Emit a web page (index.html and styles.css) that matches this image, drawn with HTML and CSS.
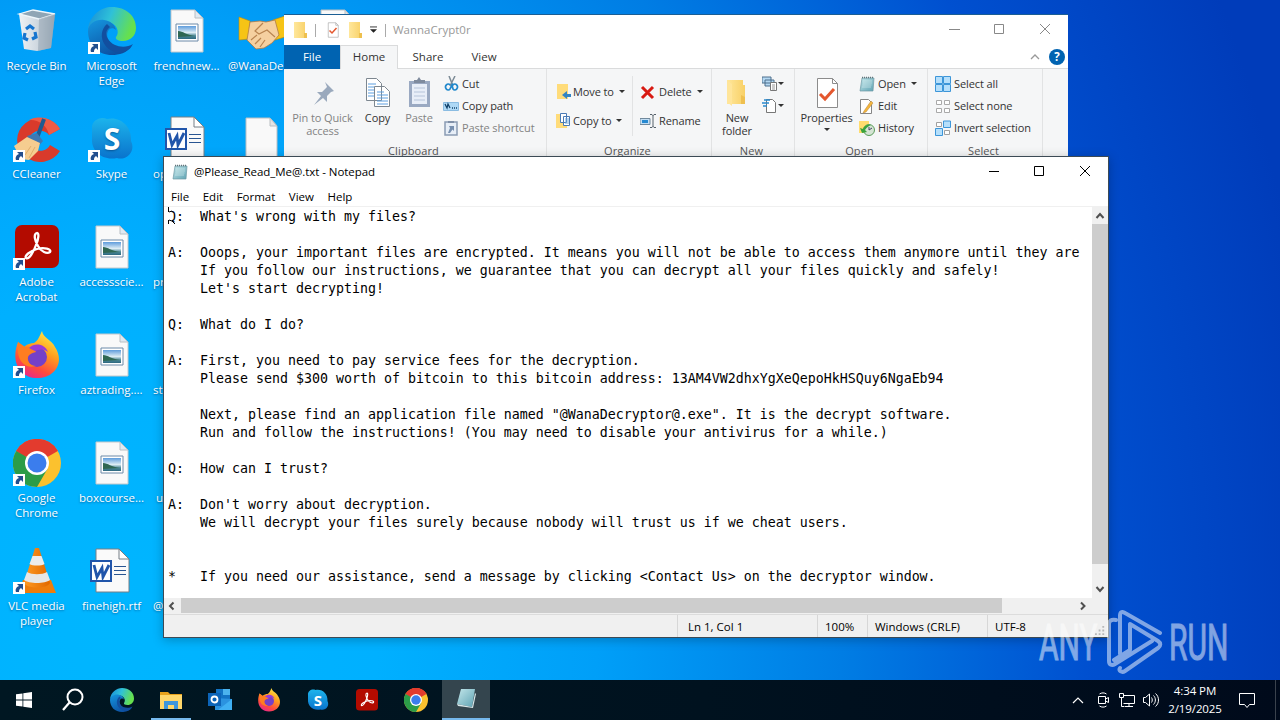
FILE: index.html
```html
<!DOCTYPE html>
<html lang="en">
  <head>
    <meta charset="UTF-8">
    <title>Desktop</title>
    <link rel="stylesheet" href="styles.css">
  </head>
  <body>
    <!-- shared icons -->
    <svg class="defs" width="0" height="0">
      <defs>
        <linearGradient id="edge1" x1="0" y1="0" x2="1" y2="0.3"><stop offset="0" stop-color="#1689d8"/><stop offset="0.5" stop-color="#2fc1d8"/><stop offset="1" stop-color="#66e04e"/></linearGradient>
        <linearGradient id="edge2" x1="0" y1="0" x2="0.6" y2="1"><stop offset="0" stop-color="#1597e0"/><stop offset="1" stop-color="#0c4fa0"/></linearGradient>
        <linearGradient id="fox" x1="0.8" y1="0" x2="0.3" y2="1"><stop offset="0" stop-color="#fff04a"/><stop offset="0.4" stop-color="#ffa01e"/><stop offset="0.75" stop-color="#ff4b3c"/><stop offset="1" stop-color="#e8288c"/></linearGradient>
        <linearGradient id="sky" x1="0" y1="0" x2="0" y2="1"><stop offset="0" stop-color="#1cb4ec"/><stop offset="1" stop-color="#0a73cc"/></linearGradient>
        <linearGradient id="photo" x1="0" y1="0" x2="0" y2="1"><stop offset="0" stop-color="#5e9cdc"/><stop offset="0.5" stop-color="#dcecf4"/><stop offset="0.75" stop-color="#4f8a98"/><stop offset="1" stop-color="#2c6880"/></linearGradient>
        <linearGradient id="note" x1="0" y1="0" x2="1" y2="1"><stop offset="0" stop-color="#c2e6ea"/><stop offset="1" stop-color="#5fa3b3"/></linearGradient>
        <linearGradient id="bin" x1="0" y1="0" x2="1" y2="0"><stop offset="0" stop-color="#eef2f5"/><stop offset="0.6" stop-color="#c9d3dc"/><stop offset="1" stop-color="#94a5b3"/></linearGradient>
        <linearGradient id="cone" x1="0" y1="0" x2="1" y2="0"><stop offset="0" stop-color="#ff9a22"/><stop offset="1" stop-color="#e06800"/></linearGradient>
        <linearGradient id="fold" x1="0" y1="0" x2="1" y2="0"><stop offset="0" stop-color="#ffe79b"/><stop offset="1" stop-color="#f8d066"/></linearGradient>

        <symbol id="i-bin" viewBox="0 0 48 48">
          <path d="M6 7l14-4 22 4-4 34-14 3-13-2z" fill="url(#bin)"/>
          <path d="M6 7l14-4 22 4-16 5z" fill="#8fa5b5" stroke="#eef6fb" stroke-width="1.3"/>
          <path d="M26 12l-1 32 13-3 4-34z" fill="#98a7b4" opacity="0.6"/>
          <path d="M13 22l4-3 4 3M22 25l1 5-4 2M15 33l-4-2 1-5" fill="none" stroke="#1675cf" stroke-width="3.2"/>
        </symbol>
        <symbol id="i-edge" viewBox="0 0 48 48">
          <path d="M0 22C2 8 13 0 24 0c14 0 24 9 24 21 0 8-6 13-13 13-5 0-8-2-7-4 4-5 1-14-9-15C10 14 3 18 0 22z" fill="url(#edge1)"/>
          <path d="M0 24c0-7 8-12 16-11 7 1 11 5 12 10-5-5-11 1-8 9 3 9 15 14 24 7-5 7-13 9-20 9C10 48 0 38 0 24z" fill="url(#edge2)"/>
          <path d="M19 17c-6 5-7 14-2 21 4 6 13 9 18 7 5-1 8-5 10-8-8 5-20 3-25-5-3-5-2-9 2-12-1-1-2-2-3-3z" fill="#124f9f"/>
        </symbol>
        <symbol id="i-photo" viewBox="0 0 48 48">
          <path d="M8 3h24l8 8v34H8z" fill="#f9f9f9" stroke="#c3c8cc"/>
          <path d="M32 3v8h8z" fill="#dfe9f2" stroke="#b8bfc4"/>
          <path d="M13 17h22v17H13z" fill="#fff" stroke="#6c8aa8"/>
          <path d="M15 19h18v13H15z" fill="url(#photo)"/>
          <path d="M15 24c5 0 8 4 17 5l-17 1z" fill="#2f6753"/>
        </symbol>
        <symbol id="i-blank" viewBox="0 0 48 48">
          <path d="M8 3h24l7 8v34H8z" fill="#f9f9f9" stroke="#b9bec2"/>
          <path d="M32 3v8h7z" fill="#e4e4e4" stroke="#b9bec2"/>
        </symbol>
        <symbol id="i-word" viewBox="0 0 48 48">
          <path d="M8 2h23l10 10v33H8z" fill="#fafafa" stroke="#777f86"/>
          <path d="M31 2v10h10z" fill="#fff" stroke="#777f86"/>
          <path d="M26 19.500h12M26 23.500h12M26 27.500h12" stroke="#295592" stroke-width="1.2"/>
          <path d="M3 14h20v20H3z" fill="#fff" stroke="#2155aa" stroke-width="2"/>
          <path d="M6 18l3 12 5-9 1 9 6-12" fill="none" stroke="#2155aa" stroke-width="2.8"/>
        </symbol>
        <symbol id="i-hands" viewBox="0 0 48 48">
          <path d="M1 10l11 4-1 18-10 1zM47 9l-12 4 2 20 10-3z" fill="#f6c416" stroke="#c58a00" stroke-width="0.6"/>
          <path d="M12 15l10-1 6 1 9-2 4 15-7 8-8 5-8 1-9-9z" fill="#f5d0a0" stroke="#b07b45" stroke-width="0.8"/>
          <path d="M25 16l-8 8 4 3 8-4 8 7M13 33l6-5M17 37l6-6M22 40l5-7" fill="none" stroke="#b98450" stroke-width="1.2"/>
        </symbol>
        <symbol id="i-cc" viewBox="0 0 48 48">
          <path d="M47 14A23 22 0 1 0 47 36L37 30A11 10 0 1 1 36 20z" fill="#d93a2b"/>
          <path d="M47 14A23 22 0 0 0 16 5c8-1 18 4 20 15z" fill="#f05b45"/>
          <path d="M31 4l-7 19" stroke="#205b91" stroke-width="4"/>
          <path d="M14 21l10-3 6 8-6 7z" fill="#3e79b4"/>
          <path d="M1 31l13-9 13 6-2 8-9 9-8-1z" fill="#f5cd90"/>
          <path d="M12 40l6-9M16 43l6-11" stroke="#e0ae6c"/>
        </symbol>
        <symbol id="i-skype" viewBox="0 0 48 48">
          <path d="M4 14C3 5 13 1 19 4 32 1 44 11 43 26c5 10-4 20-14 17C14 46 3 36 4 23z" fill="url(#sky)"/>
          <text x="24" y="35" text-anchor="middle" font-family="Open Sans" font-weight="700" font-size="30" fill="#fff">S</text>
        </symbol>
        <symbol id="i-acro" viewBox="0 0 48 48">
          <rect x="2" y="2" width="44" height="43" rx="7" fill="#b30b00"/>
          <path d="M24 10c-4 1-2 8 1 13 3 6 9 8 12 6 2-3-6-5-13-3-7 2-13 7-11 9 3 2 8-7 10-13 3-7 3-12 1-12z" fill="none" stroke="#fff" stroke-width="2.3"/>
        </symbol>
        <symbol id="i-fox" viewBox="0 0 48 48">
          <path d="M5 11l6 5c3-3 7-4 10-4 4-2 6-8 8-12 1 7 10 9 13 16 10 15 0 31-18 31C8 47-3 32 5 11z" fill="url(#fox)"/>
          <circle cx="24" cy="26" r="10" fill="#7540c8"/>
          <path d="M5 11l7 5c6-1 9 1 11 5-5 1-7 3-8 5-1 5 3 9 8 9-9 3-17-3-18-14z" fill="#ff7d20"/>
          <path d="M16 17c6-6 16-4 19 4-6-4-9-2-13-1z" fill="#9a3ad6"/>
        </symbol>
        <symbol id="i-chrome" viewBox="0 0 48 48">
          <circle cx="24" cy="24" r="24" fill="#fbc12e"/>
          <path d="M24 24L3.200 12A24 24 0 0 1 44.800 12z" fill="#e33b2e"/>
          <path d="M24 12h20.800A24 24 0 0 0 3.200 12l8 6z" fill="#e33b2e"/>
          <path d="M3.200 12A24 24 0 0 0 24 48l10.400-18L24 24z" fill="#2b9c48"/>
          <circle cx="24" cy="24" r="12" fill="#fff"/>
          <circle cx="24" cy="24" r="9.500" fill="#3b7ded"/>
        </symbol>
        <symbol id="i-vlc" viewBox="0 0 48 48">
          <path d="M10 33h28l5 13H5z" fill="#ee7d0c"/>
          <path d="M22 1h4l11 35c-3 6-23 6-26 0z" fill="url(#cone)"/>
          <path d="M19.500 9h9l3 8c-3 2-12 2-15 0z" fill="#ececec"/>
          <path d="M14 25c5 3 15 3 20 0l3 8c-5 4-21 4-26 0z" fill="#e6e6e6"/>
        </symbol>
        <symbol id="i-short" viewBox="0 0 12 12">
          <path d="M0 0h12v12H0z" fill="#fff"/>
          <path d="M4 2h6v6L8 6c-2 1-2 3-2 4H3C2 8 3 5 6 4z" fill="#234f8e"/>
        </symbol>
        <symbol id="i-note" viewBox="0 0 16 16">
          <path d="M3 2h12l-1 13H1z" fill="url(#note)" stroke="#6e9aa5" stroke-width="0.7"/>
          <path d="M4 5h9M4 7h9M3.500 9h9M3 11h9" stroke="#e4f5f7" stroke-width="0.5"/>
          <path d="M3 1.500h12" stroke="#62757b" stroke-width="1.600" stroke-dasharray="1 1"/>
        </symbol>
        <symbol id="i-folder" viewBox="0 0 16 16">
          <path d="M2 0h11v11h2v5H2z" fill="url(#fold)"/>
          <path d="M12 11h3v5h-3z" fill="#eec04e"/>
        </symbol>
        <symbol id="i-check" viewBox="0 0 32 32">
          <path d="M6.500 1.500h15l5 5v24h-20z" fill="#fff" stroke="#8c8c8c"/>
          <path d="M21.500 1.500v5h5" fill="none" stroke="#8c8c8c"/>
          <path d="M9 17l5 5 9-10" fill="none" stroke="#e4572e" stroke-width="3"/>
        </symbol>
      </defs>
    </svg>

    <div class="screen">
      <div class="desktop">
        <div class="icon"><svg><use href="#i-bin"/></svg><span>Recycle Bin</span></div>
        <div class="icon"><svg><use href="#i-cc"/></svg><svg class="short"><use href="#i-short"/></svg><span>CCleaner</span></div>
        <div class="icon"><svg><use href="#i-acro"/></svg><svg class="short"><use href="#i-short"/></svg><span>Adobe<br>Acrobat</span></div>
        <div class="icon"><svg><use href="#i-fox"/></svg><svg class="short"><use href="#i-short"/></svg><span>Firefox</span></div>
        <div class="icon"><svg><use href="#i-chrome"/></svg><svg class="short"><use href="#i-short"/></svg><span>Google<br>Chrome</span></div>
        <div class="icon"><svg><use href="#i-vlc"/></svg><svg class="short"><use href="#i-short"/></svg><span>VLC media<br>player</span></div>

        <div class="icon"><svg><use href="#i-edge"/></svg><svg class="short"><use href="#i-short"/></svg><span>Microsoft<br>Edge</span></div>
        <div class="icon"><svg><use href="#i-skype"/></svg><svg class="short"><use href="#i-short"/></svg><span>Skype</span></div>
        <div class="icon"><svg><use href="#i-photo"/></svg><span>accessscie...</span></div>
        <div class="icon"><svg><use href="#i-photo"/></svg><span>aztrading....</span></div>
        <div class="icon"><svg><use href="#i-photo"/></svg><span>boxcourse...</span></div>
        <div class="icon"><svg><use href="#i-word"/></svg><span>finehigh.rtf</span></div>

        <div class="icon"><svg><use href="#i-photo"/></svg><span>frenchnew...</span></div>
        <div class="icon cut"><svg><use href="#i-word"/></svg><span>op</span></div>
        <div class="icon cut"><svg></svg><span>pr</span></div>
        <div class="icon cut"><svg></svg><span>st</span></div>
        <div class="icon cut"><svg></svg><span>&nbsp;u</span></div>
        <div class="icon cut"><svg></svg><span>@</span></div>

        <div class="icon cut"><svg><use href="#i-hands"/></svg><span>@WanaDec</span></div>
        <div class="icon"><svg><use href="#i-blank"/></svg></div>
        <div class="icon last"><svg><use href="#i-blank"/></svg></div>
      </div>

      <!-- explorer -->
      <div class="window explorer">
        <div class="titlebar">
          <svg class="s16"><use href="#i-folder"/></svg>
          <i class="bar"></i>
          <svg class="s16"><use href="#i-check"/></svg>
          <svg class="s16"><use href="#i-folder"/></svg>
          <svg class="qat" viewBox="0 0 8 8"><path d="M0 .500h8" stroke="#222"/><path d="M0 3h8L4 7z" fill="#222"/></svg>
          <i class="bar"></i>
          <span class="caption">WannaCrypt0r</span>
          <svg class="controls" viewBox="0 0 138 30"><path d="M19 14.500h11M64.500 9.500h9v9h-9zM110 9l10 10M120 9l-10 10" fill="none" stroke="#888"/></svg>
        </div>
        <div class="tabs">
          <span class="tab file">File</span>
          <span class="tab home">Home</span>
          <span class="tab">Share</span>
          <span class="tab">View</span>
          <svg class="chev" viewBox="0 0 10 6"><path d="M1 5l4-4 4 4" fill="none" stroke="#999" stroke-width="1.300"/></svg>
          <span class="help">?</span>
        </div>
        <div class="ribbon">
          <div class="group g-clip">
            <div class="body">
              <div class="big pin off"><svg viewBox="0 0 32 32"><path d="M18 5l9 9-3 1-4 4v6l-4-4-9 7 7-9-4-4h5l5-5z" fill="#9aa9bd"/></svg>Pin to Quick<br>access</div>
              <div class="big copy"><svg viewBox="0 0 32 32"><path d="M4.500 1.500h10l5 5v17h-15zM12.500 9.500h10l5 5v15h-15z" fill="#fff" stroke="#7d8790"/><path d="M6 7h8M6 10h6M6 13h6M6 16h6M6 19h6M15 15h7M15 18h11M15 21h11M15 24h11M15 27h11" stroke="#5c9fe0"/></svg>Copy</div>
              <div class="big paste off"><svg viewBox="0 0 32 32"><path d="M6 4h21v26H6z" fill="#9aa9c2"/><path d="M9 7h15v20H9z" fill="#e8eef8"/><path d="M11 6V3h3l2-3 2 3h4v3z" fill="#7f8b9e"/><path d="M11 11h11M11 15h11M11 19h11M11 23h11" stroke="#b6c4da"/></svg>Paste</div>
              <div class="rows">
                <div class="row"><svg viewBox="0 0 16 16"><path d="M6 0l4 10M12 0L7 10" stroke="#7c8b96" stroke-width="1.500"/><path d="M7 9a2.500 3 0 1 0 0 4l2-4 1 4a2.500 3 0 1 0 0-4" fill="none" stroke="#2188cc" stroke-width="1.700"/></svg>Cut</div>
                <div class="row"><svg viewBox="0 0 16 16"><path d="M.500 4.500h15v8H.500z" fill="#aed8f5" stroke="#8abce2"/><path d="M2 6l2 4 1-4 2 4M9 10h1M11 10h1M13 10h1" fill="none" stroke="#12436c" stroke-width="1.300"/></svg>Copy path</div>
                <div class="row off"><svg viewBox="0 0 16 16"><path d="M2 2h12v13H2z" fill="#e7eef7" stroke="#8b9cb4" stroke-width="1.500"/><path d="M5 1h6v2H5z" fill="#8090a8"/><path d="M6 6h5v5L9.500 9.500 7 13H5l2-5z" fill="#7890b0"/></svg>Paste shortcut</div>
              </div>
            </div>
            <div class="name">Clipboard</div>
          </div>
          <div class="group g-org">
            <div class="body">
              <div class="rows tall first">
                <div class="row"><svg viewBox="0 0 16 16"><path d="M1 0h11v15H1z" fill="#ffdc7a"/><path d="M15 13h-4v2L6 11l5-4v3h4z" fill="#3284c4"/></svg>Move to<b></b></div>
                <div class="row"><svg viewBox="0 0 16 16"><path d="M0 1h11v14H0z" fill="#ffdc7a"/><path d="M4.500 .500h6v9h-6zM7.500 3.500h6v9h-6z" fill="#fff" stroke="#4a7ab5"/><path d="M9 6h4M9 8h4M9 10h4" stroke="#6fa7dd"/></svg>Copy to<b></b></div>
              </div>
              <i class="split"></i>
              <div class="rows tall">
                <div class="row"><svg viewBox="0 0 16 16"><path d="M2 3l11 11M13 3L2 14" stroke="#d81a12" stroke-width="3"/></svg>Delete<b></b></div>
                <div class="row"><svg viewBox="0 0 16 16"><path d="M0 5.500h10v6H0z" fill="#c3def4" stroke="#71899c"/><path d="M2 7h6v3H2z" fill="#2689d1"/><path d="M10 1.500h2l1 1 1-1h2M13 2v12M10 14.500h2l1-1 1 1h2" fill="none" stroke="#55606a"/></svg>Rename</div>
              </div>
            </div>
            <div class="name">Organize</div>
          </div>
          <div class="group g-new">
            <div class="body">
              <div class="big newf"><svg viewBox="0 0 32 32"><path d="M6 3h16v5h2v19H6z" fill="url(#fold)"/><path d="M6 3l5 4v22l-5-4z" fill="#ffe59a"/><path d="M20 18l4 2v7h-4z" fill="#efc050"/></svg>New<br>folder</div>
              <div class="rows">
                <div class="row"><svg viewBox="0 0 16 16"><path d="M0 1h9v6H0zM3 4h9v6H3z" fill="#b4d8f2" stroke="#4d6f8c"/><path d="M8.500 6.500h6v8h-6z" fill="#fff" stroke="#777"/><path d="M10 9h3M10 11h3M10 13h3" stroke="#999"/></svg><b></b></div>
                <div class="row"><svg viewBox="0 0 16 16"><path d="M4.500 1.500h6l3 3v10h-9z" fill="#fff" stroke="#777"/><path d="M2 2h6M0 5h7M1 8h4" stroke="#2a8ad0" stroke-width="1.500"/></svg><b></b></div>
              </div>
            </div>
            <div class="name">New</div>
          </div>
          <div class="group g-open">
            <div class="body">
              <div class="big prop"><svg><use href="#i-check"/></svg>Properties<br><b></b></div>
              <div class="rows">
                <div class="row"><svg><use href="#i-note"/></svg>Open<b></b></div>
                <div class="row"><svg viewBox="0 0 16 16"><path d="M1.500 1.500h8l3 3v11h-11z" fill="#fff" stroke="#858585"/><path d="M5 13l7-10 2 2-7 9-3 1z" fill="#f6b73c" stroke="#b0813a" stroke-width="0.500"/></svg>Edit</div>
                <div class="row"><svg viewBox="0 0 16 16"><path d="M0 1h10v12H0z" fill="#ffdc6e"/><circle cx="10" cy="10" r="5.500" fill="#d5e4d4" stroke="#5b9c5b"/><path d="M10 7v3l3-2" fill="none" stroke="#446"/><path d="M1 8l2 5 5-1-2-2c2-3 4-4 6-5-4-1-7 1-8 4z" fill="#3aa33c"/></svg>History</div>
              </div>
            </div>
            <div class="name">Open</div>
          </div>
          <div class="group g-sel">
            <div class="body">
              <div class="rows">
                <div class="row"><svg viewBox="0 0 16 16"><path d="M.500 .500h7v7h-7zM8.500 .500h7v7h-7zM.500 8.500h7v7h-7zM8.500 8.500h7v7h-7z" fill="#b5dffb" stroke="#3d96d9"/></svg>Select all</div>
                <div class="row"><svg viewBox="0 0 16 16"><path d="M1.500 2.500h5v4h-5zM9.500 2.500h5v4h-5zM1.500 10.500h5v4h-5zM9.500 10.500h5v4h-5z" fill="#fff" stroke="#a9a9a9"/></svg>Select none</div>
                <div class="row"><svg viewBox="0 0 16 16"><path d="M1.500 2.500h5v4h-5zM9.500 10.500h5v4h-5z" fill="#fff" stroke="#a0a0a0"/><path d="M8.500 1h7v6.500h-7zM.500 8.500h7v7h-7z" fill="#b5dffb" stroke="#3d96d9"/></svg>Invert selection</div>
              </div>
            </div>
            <div class="name">Select</div>
          </div>
        </div>
      </div>

      <!-- notepad -->
      <div class="window notepad">
        <div class="titlebar">
          <svg class="s16"><use href="#i-note"/></svg>
          <span class="caption">@Please_Read_Me@.txt - Notepad</span>
          <svg class="controls" viewBox="0 0 138 30"><path d="M19 14.500h10M64.500 9.500h9v9h-9zM110 9l10 10M120 9l-10 10" fill="none" stroke="#000"/></svg>
        </div>
        <div class="menu"><span>File</span><span>Edit</span><span>Format</span><span>View</span><span>Help</span></div>
        <div class="edit">
<pre>Q:  What's wrong with my files?

A:  Ooops, your important files are encrypted. It means you will not be able to access them anymore until they are
    If you follow our instructions, we guarantee that you can decrypt all your files quickly and safely!
    Let's start decrypting!

Q:  What do I do?

A:  First, you need to pay service fees for the decryption.
    Please send $300 worth of bitcoin to this bitcoin address: 13AM4VW2dhxYgXeQepoHkHSQuy6NgaEb94

    Next, please find an application file named "@WanaDecryptor@.exe". It is the decrypt software.
    Run and follow the instructions! (You may need to disable your antivirus for a while.)

Q:  How can I trust?

A:  Don't worry about decryption.
    We will decrypt your files surely because nobody will trust us if we cheat users.


*   If you need our assistance, send a message by clicking &lt;Contact Us&gt; on the decryptor window.</pre>
          <div class="vscroll">
            <svg viewBox="0 0 16 17"><path d="M4.500 11L8 7l3.500 4" fill="none" stroke="#505050" stroke-width="2"/></svg>
            <div class="thumb"></div>
            <svg viewBox="0 0 16 17"><path d="M4.500 6L8 10l3.500-4" fill="none" stroke="#505050" stroke-width="2"/></svg>
          </div>
          <svg class="pointer" viewBox="0 0 9 18"><path d="M0 0l5 7-1 2v5l2 4H0z" fill="#fff"/><path d="M.500 0v5M1 5l3-1M.500 13v4M1 13l3 1M4 14l3 3" fill="none" stroke="#000"/></svg>
        </div>
        <div class="hscroll">
          <svg viewBox="0 0 16 16"><path d="M9.500 4.500L6 8l3.500 3.500" fill="none" stroke="#505050" stroke-width="2"/></svg>
          <div class="thumb"></div>
          <svg viewBox="0 0 16 16"><path d="M6 4.500L9.500 8 6 11.500" fill="none" stroke="#505050" stroke-width="2"/></svg>
        </div>
        <div class="status">
          <span class="st-pos">Ln 1, Col 1</span>
          <span class="st-zoom">100%</span>
          <span class="st-eol">Windows (CRLF)</span>
          <span class="st-enc">UTF-8</span>
          <svg class="grip" viewBox="0 0 12 12"><path d="M8 1h2v2H8zM4 5h2v2H4zM8 5h2v2H8zM0 9h2v2H0zM4 9h2v2H4zM8 9h2v2H8z" fill="#b8b8b8"/></svg>
        </div>
      </div>

      <svg class="mark" viewBox="0 0 200 70">
        <g class="mark-text">
          <text transform="translate(3 54) scale(0.6 1)">ANY</text>
          <text transform="translate(133 54) scale(0.6 1)">RUN</text>
        </g>
        <path d="M80 14c-5-1-7 1-7 4v37c0 4 3 5 6 3l37-23M84 48V10c0-4 2-5 5-3l35 20M84 62c-2 3 2 5 5 3l33-23c3-2 3-5 0-7L94 18v26L78 54" fill="none" stroke="#fff" stroke-width="4" stroke-linejoin="round" stroke-linecap="round"/>
      </svg>

      <div class="taskbar">
        <div class="task start"><svg viewBox="0 0 16 16"><path d="M0 2.300l6.500-.900v6.200H0zM7.300 1.300L16 0v7.600H7.300zM0 8.400h6.500v6.200L0 13.700zM7.300 8.400H16V16l-8.700-1.300z" fill="#fff"/></svg></div>
        <div class="task"><svg viewBox="0 0 24 24"><circle cx="14" cy="9" r="7.500" fill="none" stroke="#fff" stroke-width="2"/><path d="M8.500 14.500L2 22" stroke="#fff" stroke-width="2.200"/></svg></div>
        <div class="task"><svg><use href="#i-edge"/></svg></div>
        <div class="task open"><svg viewBox="0 0 24 24"><path d="M1 4h8l2 2h12v5H1z" fill="#e8a21c"/><path d="M1 7h22v14H1z" fill="#ffd76b"/><path d="M5 21v-8h14v8h-4v-4H9v4z" fill="#3e96dc"/></svg></div>
        <div class="task"><svg viewBox="0 0 24 24"><path d="M8 1h14v12H8z" fill="#1273c4"/><path d="M15 1h7v6h-7z" fill="#4bb3ee"/><path d="M7 10l17 1v11H7z" fill="#2b93e0"/><path d="M24 11L10 22h14z" fill="#3fb0f3"/><path d="M0 5h13v13H0z" fill="#0c64b8"/><circle cx="6.500" cy="11.500" r="3" fill="none" stroke="#fff" stroke-width="1.800"/></svg></div>
        <div class="task"><svg><use href="#i-fox"/></svg></div>
        <div class="task"><svg><use href="#i-skype"/></svg></div>
        <div class="task"><svg><use href="#i-acro"/></svg></div>
        <div class="task"><svg><use href="#i-chrome"/></svg></div>
        <div class="task active"><svg viewBox="0 0 24 24"><path d="M7 2h14l-3 18-15-3z" fill="url(#note)"/><path d="M3 17l15 3 3-14 1 1-3 14-15-2z" fill="#d8e8ea"/></svg></div>
        <div class="tray">
          <svg viewBox="0 0 12 8"><path d="M1 7l5-5 5 5" fill="none" stroke="#fff" stroke-width="1.200"/></svg>
          <svg class="cam" viewBox="0 0 12 16"><path d="M1.500 4.500h7v7h-7zM8.500 7l3-1.500v5l-3-1.500M2.500 2c2-1.500 5-1.500 7 0M2.500 14c2 1.500 5 1.500 7 0" fill="none" stroke="#fff"/></svg>
          <svg class="net" viewBox="0 0 16 14"><path d="M4.500 2.500h11v8h-11M10 10.500v3M6 13.500h8M.500 .500h4v4h-4zM2.500 5v8.500h3" fill="none" stroke="#fff"/></svg>
          <svg class="vol" viewBox="0 0 16 14"><path d="M.500 4.500h2l4-3.500v12l-4-3.500h-2zM8.500 4.500c1 1.500 1 3.500 0 5M10.500 2.500c2.500 2.500 2.500 6.500 0 9M12.500 .500c4 3.500 4 9.500 0 13" fill="none" stroke="#fff"/></svg>
          <div class="clock">4:34 PM<br>2/19/2025</div>
          <svg class="msg" viewBox="0 0 16 16"><path d="M.500 1.500h15v11h-5l-2.500 3-2.500-3h-5z" fill="none" stroke="#fff"/></svg>
          <i class="peek"></i>
        </div>
      </div>
    </div>
  </body>
</html>
```

FILE: styles.css
```css
* {
    box-sizing: border-box;
}

body {
    margin: 0;
    font-family: "Open Sans", sans-serif;
    font-size: 11.5px;
    overflow: hidden;
}

svg {
    display: block;
    flex: none;
}

.defs {
    position: absolute;
}

.screen {
    position: relative;
    width: 1280px;
    height: 720px;
    overflow: hidden;
    background: radial-gradient(ellipse 1220px 1500px at 110px 620px, #00b6ff 0%, #00b0ff 22%, #009ff8 40%, #007de4 60%, #0050d0 80%, #003cba 100%);
}

/* desktop icons */
.desktop {
    display: grid;
    grid-template-rows: repeat(6, 108px);
    grid-auto-columns: 75px;
    grid-auto-flow: column;
    width: 380px;
    margin-left: -1px;
}

.icon {
    position: relative;
    display: flex;
    flex-direction: column;
    align-items: center;
    padding-top: 7px;
    color: #fff;
    line-height: 15px;
    text-align: center;
    white-space: nowrap;
    text-shadow: 0 1px 2px rgba(0, 40, 90, 0.5);
}

.icon svg {
    width: 48px;
    height: 48px;
    margin-bottom: 3px;
}

.icon .short {
    position: absolute;
    left: 14px;
    top: 42px;
    width: 12px;
    height: 12px;
}

.icon.cut span {
    align-self: flex-start;
    padding-left: 4px;
}

.icon.last {
    grid-column: 5;
    grid-row: 1;
}

/* windows */
.window {
    position: absolute;
    background: #fff;
}

.explorer {
    left: 284px;
    top: 14px;
    width: 784px;
    height: 150px;
    border-top: 1px solid #1b5e94;
    color: #333;
}

.notepad {
    left: 163px;
    top: 156px;
    width: 946px;
    height: 482px;
    border: 1px solid #3c4a55;
    color: #000;
    box-shadow: 0 2px 10px rgba(0, 0, 0, 0.25);
}

.titlebar {
    display: flex;
    align-items: center;
    height: 30px;
}

.caption {
    padding-bottom: 2px;
}

.s16 {
    width: 16px;
    height: 16px;
}

.controls {
    width: 138px;
    height: 30px;
    margin-left: auto;
}

.explorer .titlebar {
    padding-left: 8px;
}

.explorer .bar {
    width: 1px;
    height: 13px;
    margin: 0 9px 0 7px;
    background: #aaa;
}

.explorer .s16 + .s16 {
    margin-left: 6px;
}

.qat {
    width: 7px;
    height: 8px;
    margin: 0 1px 0 7px;
}

.explorer .caption {
    color: #999;
    margin-left: -2px;
}

.notepad .titlebar {
    padding-left: 8px;
}

.notepad .caption {
    margin-left: 6px;
    letter-spacing: -0.05px;
}

/* ribbon */
.tabs {
    display: flex;
    align-items: center;
    height: 24px;
    border-bottom: 1px solid #dadbdc;
}

.tab {
    width: 56px;
    height: 24px;
    line-height: 24px;
    text-align: center;
}

.tab.file {
    background: #0063b1;
    color: #fff;
}

.tab.home {
    width: 58px;
    margin-right: 2px;
    background: #f5f6f7;
    border: 1px solid #dadbdc;
    border-bottom: 0;
    line-height: 22px;
}

.chev {
    width: 10px;
    height: 6px;
    margin-left: auto;
}

.help {
    width: 16px;
    height: 16px;
    margin: 0 3px 0 9px;
    border-radius: 50%;
    background: #0063b1;
    color: #fff;
    font-weight: bold;
    line-height: 16px;
    text-align: center;
}

.ribbon {
    display: flex;
    height: 90px;
    background: #f5f6f7;
    font-size: 11px;
    letter-spacing: -0.1px;
    white-space: nowrap;
}

.group {
    border-right: 1px solid #e2e3e4;
}

.g-clip { width: 263px; }
.g-org { width: 165px; }
.g-new { width: 83px; }
.g-open { width: 133px; }
.g-sel { width: 115px; }

.body {
    display: flex;
    height: 74px;
}

.name {
    padding-right: 3px;
    text-align: center;
    line-height: 16px;
    letter-spacing: 0.1px;
    color: #555;
}

.big {
    padding-top: 8px;
    line-height: 13px;
    text-align: center;
}

.big svg {
    width: 32px;
    height: 32px;
    margin: 0 auto 2px;
}

.off {
    color: #838383;
}

.pin { width: 73px; margin-left: 2px; }
.copy { width: 37px; }
.paste { width: 42px; margin: 0 3px 0 2px; }
.newf { width: 50px; }
.prop { width: 63px; margin-right: 1px; }

.rows {
    padding-top: 4px;
}

.row {
    display: flex;
    align-items: center;
    height: 22px;
    padding-bottom: 1px;
}

.row svg {
    width: 16px;
    height: 16px;
    margin-right: 3px;
}

.tall {
    padding-top: 8px;
}

.tall .row {
    height: 29px;
    padding-bottom: 0;
}

.tall.first {
    width: 76px;
    margin-left: 9px;
}

.tall.first svg {
    margin-right: 1px;
}

.split {
    width: 1px;
    height: 60px;
    margin: 7px 7px 0 0;
    background: #e2e3e4;
}

.row b,
.prop b {
    display: inline-block;
    margin-left: 5px;
    border: 3px solid transparent;
    border-top-color: #333;
    border-bottom: 0;
}

.prop b {
    margin: 0;
    vertical-align: 4px;
}

.g-new .row b {
    margin-left: -3px;
}

.g-sel .rows {
    padding-left: 7px;
}

/* notepad */
.menu {
    display: flex;
    gap: 13.5px;
    height: 20px;
    padding-left: 7px;
    line-height: 20px;
    border-bottom: 1px solid #f0f0f0;
}

.edit {
    position: relative;
    display: flex;
    height: 391px;
}

pre {
    flex: 1;
    margin: 0;
    padding: 1px 0 0 4px;
    overflow: hidden;
    font-family: "DejaVu Sans Mono", monospace;
    font-size: 13.29px;
    line-height: 18px;
}

.pointer {
    position: absolute;
    left: 4px;
    top: 0;
    width: 9px;
    height: 18px;
}

.vscroll {
    width: 16px;
    background: #f0f0f0;
}

.vscroll svg {
    width: 16px;
    height: 17px;
}

.vscroll .thumb {
    height: 340px;
    margin-bottom: 17px;
    background: #cdcdcd;
}

.hscroll {
    display: flex;
    height: 16px;
    padding-right: 17px;
    background: #f0f0f0;
}

.hscroll svg {
    width: 16px;
    height: 16px;
}

.hscroll .thumb {
    width: 821px;
    height: 15px;
    margin: 0 auto 0 1px;
    background: #cdcdcd;
}

.status {
    display: flex;
    height: 23px;
    line-height: 23px;
    background: #f0f0f0;
    border-top: 1px solid #dcdcdc;
    padding-left: 513px;
}

.status span {
    border-left: 1px solid #d7d7d7;
}

.st-pos { width: 140px; padding-left: 10px; }
.st-zoom { width: 50px; padding-left: 7px; }
.st-eol { width: 120px; padding-left: 7px; }
.st-enc { width: 108px; padding-left: 7px; }

.grip {
    width: 11px;
    height: 11px;
    margin-top: 10px;
}

/* watermark */
.mark {
    position: absolute;
    left: 1036px;
    top: 606px;
    width: 200px;
    height: 70px;
    opacity: 0.5;
}

.mark-text {
    fill: #fff;
    stroke: #fff;
    stroke-width: 1px;
    font-family: Roboto, sans-serif;
    font-size: 50px;
}

/* taskbar */
.taskbar {
    position: absolute;
    left: 0;
    bottom: 0;
    display: flex;
    width: 1280px;
    height: 40px;
    background: linear-gradient(90deg, #001722, #00121f 55%, #000a1b);
}

.task {
    display: flex;
    align-items: center;
    justify-content: center;
    width: 49px;
}

.task svg {
    width: 24px;
    height: 24px;
}

.task.start {
    width: 48px;
}

.start svg {
    width: 16px;
    height: 16px;
}

.task.open {
    background: linear-gradient(#76b9ed, #76b9ed) center bottom / 40px 2px no-repeat;
}

.task.active {
    width: 48px;
    margin-left: 2px;
    background: #34454e;
    border-bottom: 2px solid #76b9ed;
}

.tray {
    display: flex;
    align-items: center;
    margin-left: auto;
    color: #fff;
}

.tray svg {
    width: 12px;
    height: 8px;
    margin-right: 13px;
}

.tray .cam {
    height: 16px;
    margin-right: 10px;
}

.tray .net {
    width: 16px;
    height: 14px;
    margin-right: 8px;
}

.tray .vol {
    width: 16px;
    height: 14px;
    margin-right: 7px;
}

.clock {
    width: 58px;
    margin-right: 15px;
    line-height: 18px;
    text-align: center;
    letter-spacing: -0.1px;
}

.tray .msg {
    width: 16px;
    height: 16px;
    margin-right: 20px;
}

.peek {
    width: 5px;
    height: 40px;
    border-left: 1px solid #3a424d;
}
```
